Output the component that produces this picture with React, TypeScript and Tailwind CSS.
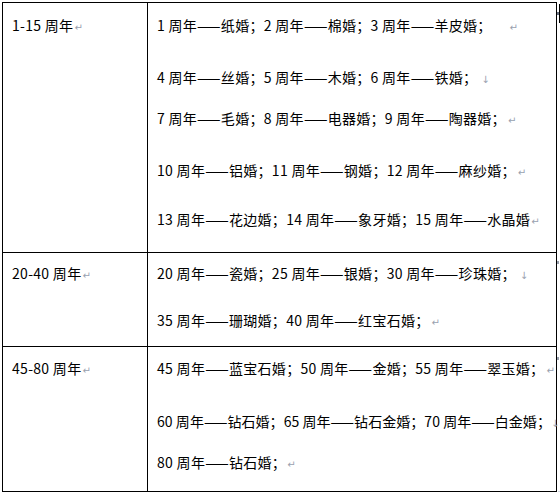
import React from "react";

type Line = { text: string; mark: "p" | "b"; gap: string; tail: string; track?: string };

const rows: {
  label: string;
  height: string;
  top: string;
  lines: Line[];
}[] = [
  {
    label: "1-15 周年",
    height: "h-[249px]",
    top: "mt-[12px]",
    lines: [
      { text: "1 周年——纸婚；2 周年——棉婚；3 周年——羊皮婚；", mark: "p", gap: "mt-[12px]", tail: "ml-[18px]" },
      { text: "4 周年——丝婚；5 周年——木婚；6 周年——铁婚；", mark: "b", gap: "mt-[32px]", tail: "ml-[4px]" },
      { text: "7 周年——毛婚；8 周年——电器婚；9 周年——陶器婚；", mark: "p", gap: "mt-[21px]", tail: "ml-[2px]" },
      { text: "10 周年——铝婚；11 周年——钢婚；12 周年——麻纱婚；", mark: "p", gap: "mt-[32px]", tail: "ml-[2px]" },
      { text: "13 周年——花边婚；14 周年——象牙婚；15 周年——水晶婚", mark: "p", gap: "mt-[29px]", tail: "ml-[1px]" },
    ],
  },
  {
    label: "20-40 周年",
    height: "h-[93px]",
    top: "mt-[10px]",
    lines: [
      { text: "20 周年——瓷婚；25 周年——银婚；30 周年——珍珠婚；", mark: "b", gap: "mt-[10px]", tail: "ml-[4px]" },
      { text: "35 周年——珊瑚婚；40 周年——红宝石婚；", mark: "p", gap: "mt-[27px]", tail: "ml-[2px]" },
    ],
  },
  {
    label: "45-80 周年",
    height: "h-[144px]",
    top: "mt-[11px]",
    lines: [
      { text: "45 周年——蓝宝石婚；50 周年——金婚；55 周年——翠玉婚；", mark: "p", gap: "mt-[11px]", tail: "ml-[2px]" },
      {
        text: "60 周年——钻石婚；65 周年——钻石金婚；70 周年——白金婚；",
        mark: "b",
        gap: "mt-[33px]",
        tail: "ml-0",
        track: "tracking-[0.05px]",
      },
      { text: "80 周年——钻石婚；", mark: "p", gap: "mt-[21px]", tail: "ml-[1px]" },
    ],
  },
];

const Mark = ({ kind, tail }: { kind: "p" | "b"; tail: string }) => (
  <span
    className={`${tail} tracking-normal text-[10px] leading-[10px] text-gray-400 font-['DejaVu_Sans',sans-serif]`}
  >
    {kind === "p" ? "↵" : "↓"}
  </span>
);

export default function App() {
  return (
    <div className="w-[560px] h-[496px] bg-white text-black text-[14px] leading-[20px] tracking-[0.3px] font-['Noto_Sans_CJK_SC',sans-serif] pl-[2px] pt-[2px] flex">
      <div className="w-[555px] h-[490px] shrink-0 border border-black">
        {rows.map((row, i) => (
          <div
            key={row.label}
            className={`flex ${row.height} ${i > 0 ? "border-t border-black box-content" : ""}`}
          >
            <div className="w-[145px] shrink-0 border-r border-black pl-[9px]">
              <div className={`${row.top} whitespace-nowrap`}>
                {row.label}
                <Mark kind="p" tail="ml-[1px]" />
              </div>
            </div>
            <div className="flex-1 pl-[9px]">
              {row.lines.map((line) => (
                <div key={line.text} className={`${line.gap} ${line.track ?? ""} whitespace-nowrap`}>
                  {line.text}
                  <Mark kind={line.mark} tail={line.tail} />
                </div>
              ))}
            </div>
          </div>
        ))}
      </div>

      {/* end-of-row markers beside the table */}
      <div className="flex flex-col">
        <div className="mt-[2px] flex items-center">
          <div className="w-[2px] h-[3px] bg-gray-500" />
          <div className="w-px h-[19px] bg-black" />
        </div>
        <div className="mt-[238px] w-[2px] h-[3px] bg-gray-400" />
        <div className="mt-[93px] w-[2px] h-[3px] bg-gray-400" />
        <div className="mt-[131px] ml-px w-[3px] h-px bg-gray-300" />
      </div>
    </div>
  );
}
